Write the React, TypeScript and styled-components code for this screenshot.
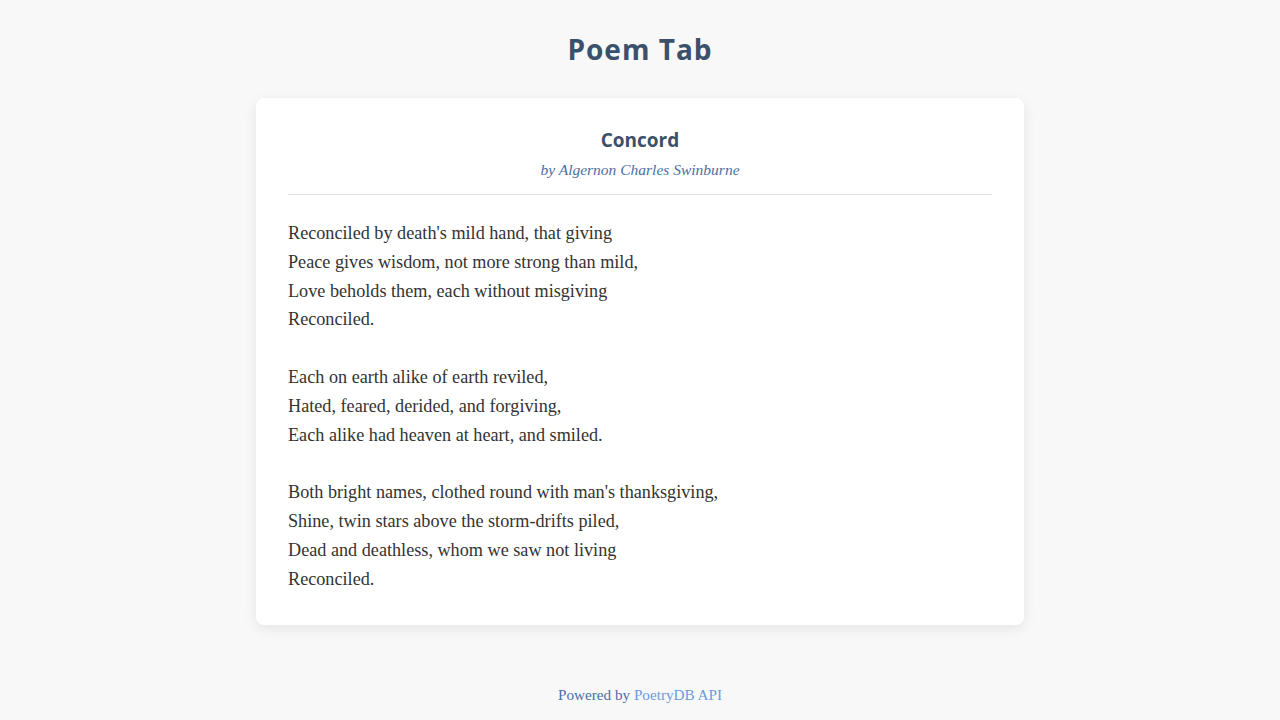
import React from 'react';
import styled, { createGlobalStyle } from 'styled-components';

const poem = {
    title: 'Concord',
    author: 'Algernon Charles Swinburne',
    lines: [
        "Reconciled by death's mild hand, that giving",
        'Peace gives wisdom, not more strong than mild,',
        'Love beholds them, each without misgiving',
        'Reconciled.',
        '',
        'Each on earth alike of earth reviled,',
        'Hated, feared, derided, and forgiving,',
        'Each alike had heaven at heart, and smiled.',
        '',
        "Both bright names, clothed round with man's thanksgiving,",
        'Shine, twin stars above the storm-drifts piled,',
        'Dead and deathless, whom we saw not living',
        'Reconciled.',
    ],
};

const GlobalStyle = createGlobalStyle`
    html, body {
        margin: 0;
        padding: 0;
        background: #f8f8f8;
    }
    body {
        font-family: 'Liberation Serif', serif;
        color: #333;
    }
`;

export default function App() {
    return <Page>
        <GlobalStyle />
        <Header>
            <Title>Poem Tab</Title>
        </Header>
        <Card>
            <PoemHead>
                <PoemTitle>{poem.title}</PoemTitle>
                <Author>by {poem.author}</Author>
            </PoemHead>
            <PoemBody>
                {poem.lines.map((line, i) =>
                    <Line key={i}>{line || '\u00a0'}</Line>
                )}
            </PoemBody>
        </Card>
        <Footer>
            Powered by <FooterLink href="#">PoetryDB API</FooterLink>
        </Footer>
    </Page>;
}

const Page = styled.div`
    min-height: 720px;
    display: flex;
    flex-direction: column;
    align-items: center;
`;

const Header = styled.header`
    padding: 30px 0 0;
    height: 68px;
`;

const Title = styled.h1`
    margin: 0;
    font-family: 'Open Sans', sans-serif;
    font-weight: 700;
    font-size: 28px;
    letter-spacing: 1px;
    line-height: 38px;
    color: #3a506b;
`;

const Card = styled.main`
    width: 768px;
    box-sizing: border-box;
    background: #fff;
    border-radius: 8px;
    padding: 28px 32px 32px;
    box-shadow: 0 4px 14px rgba(0, 0, 0, 0.08);
`;

const PoemHead = styled.div`
    text-align: center;
    padding-bottom: 14px;
    border-bottom: 1px solid #e0e0e0;
`;

const PoemTitle = styled.h2`
    margin: 0;
    font-family: 'Open Sans', sans-serif;
    font-weight: 700;
    font-size: 19px;
    line-height: 28px;
    color: #3a506b;
`;

const Author = styled.div`
    margin-top: 6px;
    font-style: italic;
    font-size: 15.5px;
    line-height: 20px;
    color: #4a6fa5;
`;

const PoemBody = styled.div`
    padding-top: 24px;
`;

const Line = styled.div`
    font-size: 18.2px;
    line-height: 28.8px;
    color: #333;
`;

const Footer = styled.footer`
    margin-top: auto;
    padding: 58px 0 16px;
    font-size: 15.2px;
    color: #4a6fa5;
`;

const FooterLink = styled.a`
    color: #6b9ae0;
    text-decoration: none;
`;
